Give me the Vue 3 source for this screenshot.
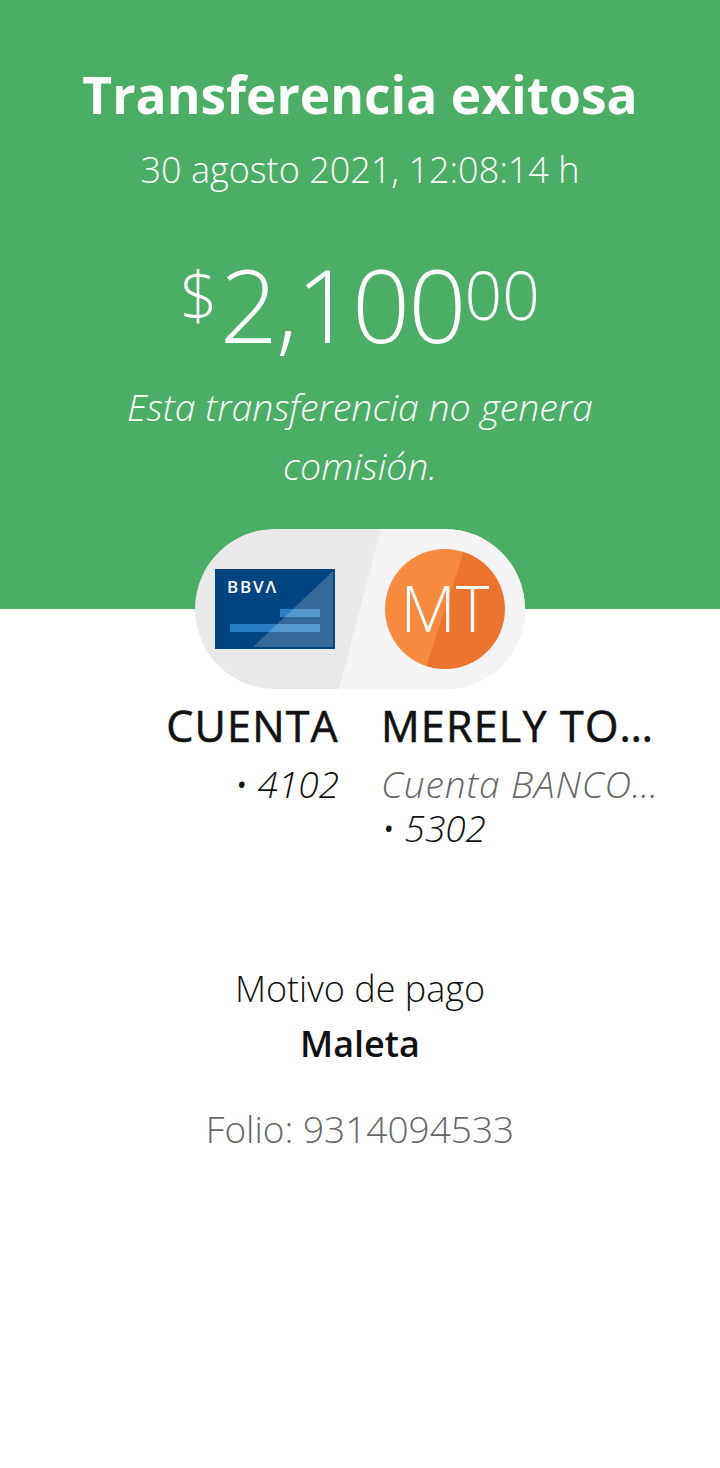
<script setup>
const accounts = [
  { name: 'CUENTA', bank: '', last: '• 4102', align: 'left' },
  { name: 'MERELY TORRES', bank: 'Cuenta BANCOPPEL', last: '• 5302', align: 'right' }
]
</script>

<template>
  <div class="page">
    <header class="hero">
      <h1>Transferencia exitosa</h1>
      <p class="date">30 agosto 2021, 12:08:14 h</p>
      <div class="amount">
        <span class="sup cur">$</span><span class="int">2,100</span><span class="sup">00</span>
      </div>
      <p class="note">Esta transferencia no genera comisión.</p>
    </header>

    <div class="pill">
      <div class="card">
        <span class="card-logo">BBVΛ</span>
        <span class="bar bar-short"></span>
        <span class="bar bar-long"></span>
        <span class="fold"></span>
      </div>
      <div class="avatar">MT</div>
    </div>

    <div class="accounts">
      <div v-for="a in accounts" :key="a.name" :class="['account', a.align]">
        <div class="name">{{ a.name }}</div>
        <div v-if="a.bank" class="bank">{{ a.bank }}</div>
        <div class="last">{{ a.last }}</div>
      </div>
    </div>

    <section class="detail">
      <div class="label">Motivo de pago</div>
      <div class="value">Maleta</div>
      <div class="folio">Folio: 9314094533</div>
    </section>
  </div>
</template>

<style>
html, body {
  margin: 0;
  background: #fff;
}
</style>

<style scoped>
.page {
  width: 720px;
  min-height: 1468px;
  background: #fff;
  color: #121212;
  font-family: "Open Sans", "Liberation Sans", sans-serif;
}
.hero {
  box-sizing: border-box;
  height: 609px;
  padding-top: 60px;
  background: #4aae66;
  color: #fff;
  text-align: center;
}
h1 {
  margin: 0;
  font-size: 51.5px;
  line-height: 68px;
  font-weight: 700;
}
.date {
  margin: 18px 0 0;
  font-size: 36px;
  line-height: 48px;
  font-weight: 300;
}
.amount {
  margin-top: 55px;
  font-size: 102px;
  line-height: 110px;
  font-weight: 300;
}
.int {
  letter-spacing: -2px;
}
.sup {
  font-size: 66px;
  line-height: 0;
  vertical-align: 23px;
}
.cur {
  margin-right: 2px;
}
.note {
  width: 520px;
  margin: 18px auto 0;
  font-size: 37.5px;
  line-height: 59px;
  font-weight: 300;
  font-style: italic;
}
.pill {
  position: relative;
  display: flex;
  justify-content: space-between;
  align-items: center;
  box-sizing: border-box;
  width: 330px;
  height: 160px;
  margin: -80px auto 0;
  padding: 0 20px;
  overflow: hidden;
  border-radius: 80px;
  background: #e9e9e9;
}
.pill::before {
  content: "";
  position: absolute;
  inset: 0;
  background: #f4f4f4;
  clip-path: polygon(186px 0, 100% 0, 100% 100%, 144px 100%);
}
.card {
  position: relative;
  width: 120px;
  height: 80px;
  overflow: hidden;
  background: #004481;
}
.card-logo {
  position: absolute;
  left: 12px;
  top: 8px;
  font-size: 17px;
  line-height: 20px;
  font-weight: 600;
  letter-spacing: 1.8px;
  color: #fff;
}
.bar {
  position: absolute;
  height: 8px;
  background: #2a80c4;
}
.bar-short {
  left: 65px;
  top: 40px;
  width: 40px;
}
.bar-long {
  left: 15px;
  top: 55px;
  width: 90px;
}
.fold {
  position: absolute;
  right: 2px;
  bottom: 2px;
  width: 80px;
  height: 76px;
  background: rgba(255, 255, 255, 0.2);
  clip-path: polygon(100% 0, 100% 100%, 0 100%);
}
.avatar {
  position: relative;
  width: 120px;
  height: 120px;
  border-radius: 50%;
  background: linear-gradient(108deg, #f68b3f 50%, #ec732e 50%);
  color: #fff;
  font-size: 64px;
  font-weight: 300;
  line-height: 118px;
  text-align: center;
}
.accounts {
  display: grid;
  grid-template-columns: 278px 278px;
  gap: 42px;
  justify-content: center;
  margin-top: 12px;
}
.account.left {
  text-align: right;
}
.name,
.bank {
  overflow: hidden;
  white-space: nowrap;
  text-overflow: ellipsis;
}
.name {
  font-size: 43px;
  line-height: 50px;
  letter-spacing: 1.2px;
  font-weight: 400;
  -webkit-text-stroke: 0.6px #121212;
}
.bank,
.last {
  font-size: 37px;
  line-height: 44px;
  font-weight: 300;
  font-style: italic;
}
.bank {
  margin-top: 11px;
  letter-spacing: 0.9px;
  color: #666;
}
.account.left .last {
  margin-top: 11px;
}
.detail {
  margin-top: 115px;
  text-align: center;
}
.label {
  font-size: 36px;
  line-height: 48px;
  font-weight: 300;
}
.value {
  margin-top: 7px;
  font-size: 36px;
  line-height: 48px;
  font-weight: 600;
}
.folio {
  margin-top: 37px;
  font-size: 37px;
  line-height: 48px;
  font-weight: 300;
  color: #666;
}
</style>
